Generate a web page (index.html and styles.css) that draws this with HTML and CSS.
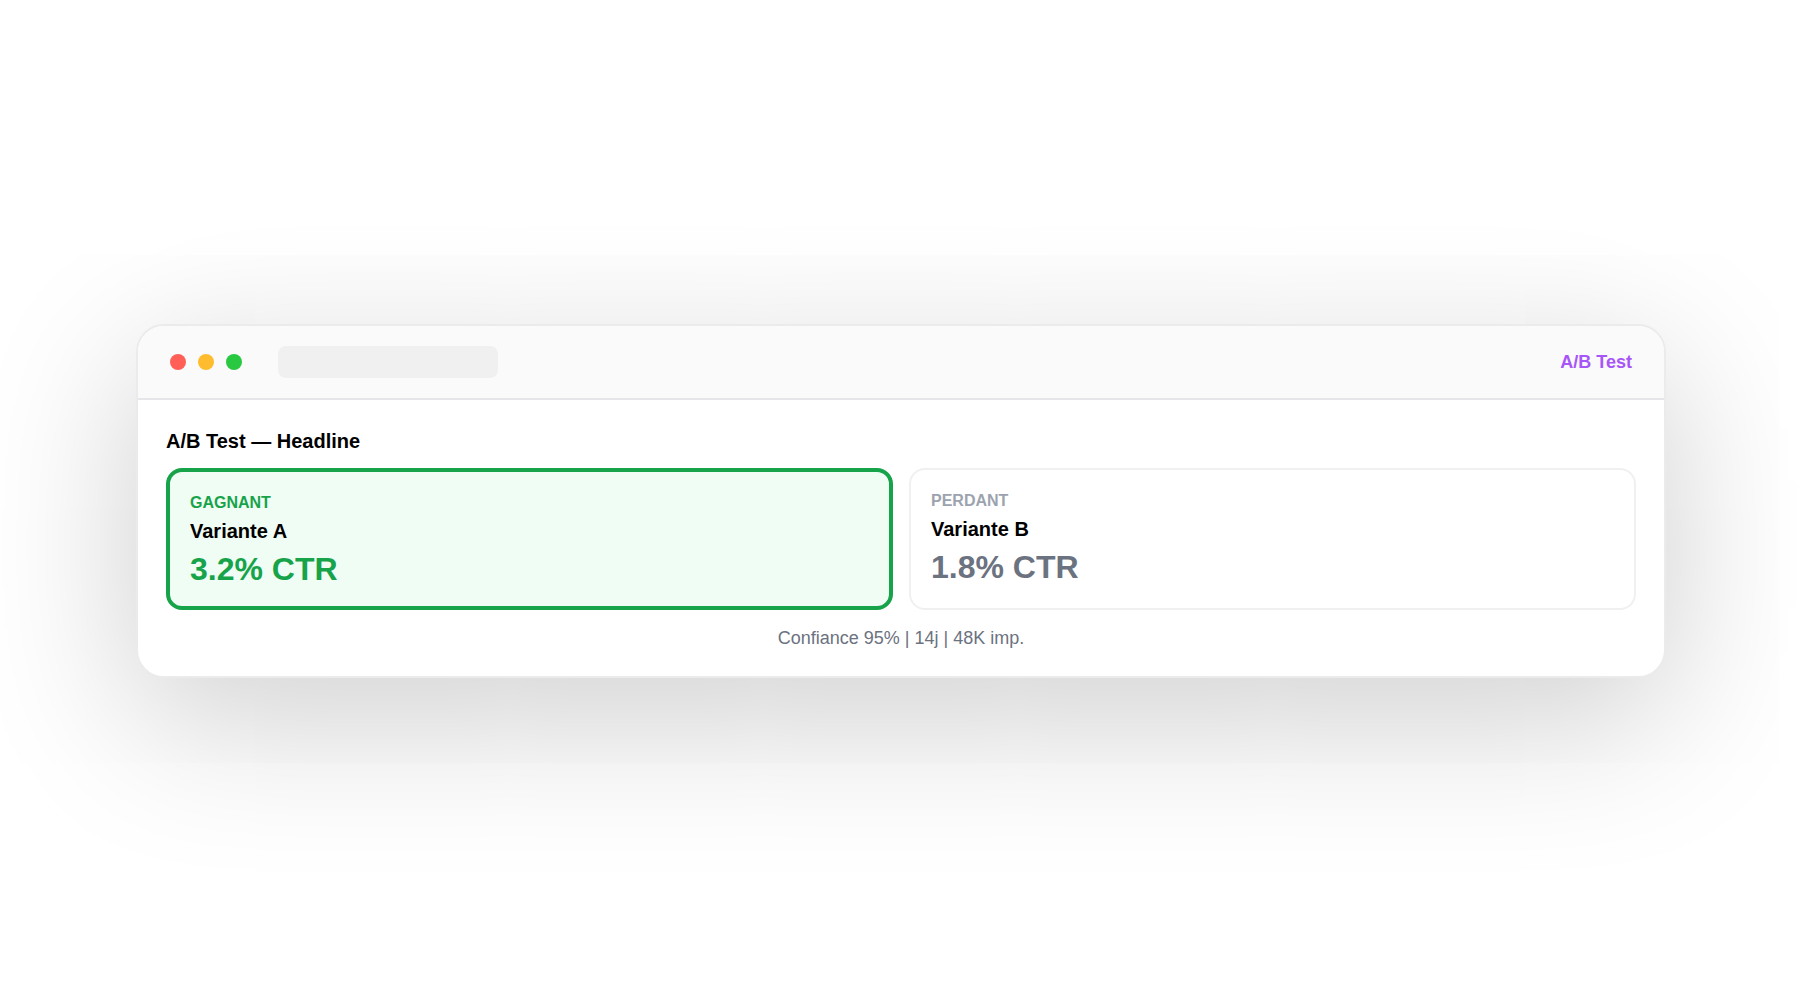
FILE: index.html
```html
<!DOCTYPE html>
<html lang="fr">
  <head>
    <meta charset="UTF-8" />
    <meta name="viewport" content="width=device-width, initial-scale=1.0" />
    <title>A/B Test</title>
    <link rel="stylesheet" href="styles.css">
  </head>
  <body>
    <main class="window">
      <!-- Title bar -->
      <header class="titlebar">
        <div class="dots">
          <span class="dot red"></span>
          <span class="dot yellow"></span>
          <span class="dot green"></span>
        </div>
        <div class="address"></div>
        <span class="tag">A/B Test</span>
      </header>

      <!-- Test results -->
      <section class="content">
        <h1>A/B Test — Headline</h1>
        <div class="variants">
          <article class="variant winner">
            <p class="status">GAGNANT</p>
            <h2>Variante A</h2>
            <p class="rate">3.2% CTR</p>
          </article>
          <article class="variant loser">
            <p class="status">PERDANT</p>
            <h2>Variante B</h2>
            <p class="rate">1.8% CTR</p>
          </article>
        </div>
        <p class="summary">Confiance 95% | 14j | 48K imp.</p>
      </section>
    </main>
  </body>
</html>
```

FILE: styles.css
```css
* {
  box-sizing: border-box;
}

body {
  margin: 0;
  min-height: 100vh;
  padding-top: 2px;
  padding-left: 2px;
  display: flex;
  align-items: center;
  justify-content: center;
  background-color: #fff;
  color: #000;
  font-family: "Helvetica Neue", Helvetica, "Liberation Sans", Arial, sans-serif;
}

h1,
h2,
p {
  margin: 0;
}

/* Window frame */
.window {
  width: 85vw;
  background-color: #fff;
  border: 2px solid #ebebeb;
  border-radius: 28px;
  box-shadow: 0 40px 160px rgba(0, 0, 0, 0.2);
  overflow: hidden;
}

/* Title bar */
.titlebar {
  display: flex;
  align-items: center;
  padding: 20px 32px;
  background-color: #fafafa;
  border-bottom: 2px solid #e5e5ea;
}

.dots {
  display: flex;
  gap: 12px;
}

.dot {
  width: 16px;
  height: 16px;
  border-radius: 50%;
}

.red {
  background-color: #ff5f57;
}

.yellow {
  background-color: #febc2e;
}

.green {
  background-color: #28c840;
}

.address {
  width: 220px;
  height: 32px;
  margin-left: 36px;
  border-radius: 8px;
  background-color: #f0f0f0;
}

.tag {
  margin-left: auto;
  color: #a855f7;
  font-size: 18px;
  font-weight: bold;
}

/* Content */
.content {
  padding: 28px;
}

h1,
h2 {
  font-size: 20px;
  line-height: 26px;
}

.variants {
  display: grid;
  grid-template-columns: 1fr 1fr;
  gap: 16px;
  margin: 14px 0 18px;
}

.variant {
  padding: 20px;
  border-radius: 16px;
}

.winner {
  background-color: #f0fdf4;
  border: 4px solid #16a34a;
}

.loser {
  border: 2px solid #f0f0f0;
}

.status {
  margin-bottom: 4px;
  font-size: 16px;
  font-weight: bold;
  line-height: 22px;
}

.rate {
  margin-top: 8px;
  font-size: 32px;
  font-weight: bold;
  line-height: 34px;
}

.winner .status,
.winner .rate {
  color: #16a34a;
}

.loser .status {
  color: #9ca3af;
}

.loser .rate {
  color: #6b7280;
}

.summary {
  color: #6b7280;
  font-size: 18px;
  line-height: 20px;
  text-align: center;
}
```
